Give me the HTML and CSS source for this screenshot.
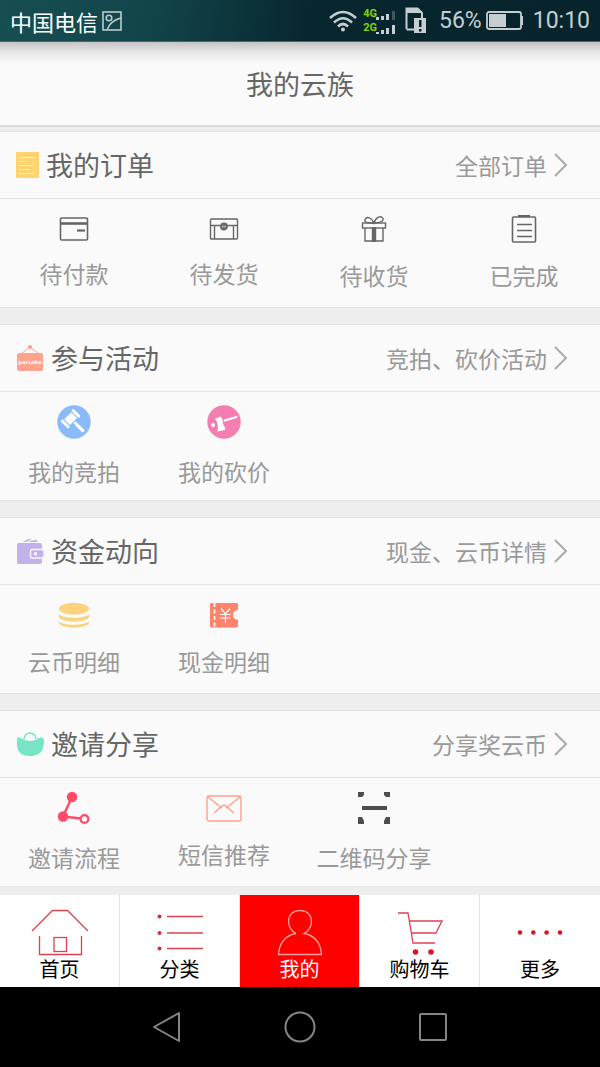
FILE: index.html
```
<!DOCTYPE html>
<html lang="zh-CN">
<head>
<meta charset="utf-8">
<meta name="viewport" content="width=device-width, initial-scale=1">
<title>我的云族</title>
<link rel="stylesheet" href="styles.css">
</head>
<body>
<div class="status">
  <span class="carrier">中国电信</span>
  <svg class="shot" width="20" height="20" viewBox="0 0 20 20" fill="none" stroke="#b9cccd" stroke-width="1.6"><rect x="1" y="1" width="18" height="18"/><circle cx="7" cy="7" r="2.8"/><path d="M5 19C7 13 11 9 19 7"/></svg>
  <div class="status-right">
    <svg width="28" height="22" viewBox="0 0 28 22" fill="none" stroke="#c5cfd2" stroke-width="2.6"><path d="M1 8Q14-4 27 8M5 12.500Q14 4 23 12.500M9 16.500Q14 11.500 19 16.500"/><circle cx="14" cy="19.500" r="2" fill="#c5cfd2" stroke="none"/></svg>
    <div class="networks"><span>4G</span><span>2G</span></div>
    <svg class="bars" width="21" height="26" viewBox="0 0 21 26" fill="#c5cfd2"><path d="M1 9h3v3H1zM6 8h3v4H6zM11 6h3v6h-3zM1 24h3v3H1zM6 22h3v4H6zM11 20h3v6h-3zM17 17h3v9h-3z"/><path fill="#3f565c" d="M17 3h3v9h-3z"/></svg>
    <svg class="sim" width="22" height="27" viewBox="0 0 22 27"><path d="M1.500 22V1.500h11L17 6v5M1.500 22.500H10" fill="none" stroke="#c5cfd2" stroke-width="2"/><path d="M1 1h12l4 5H1z" fill="#c5cfd2"/><path d="M9 11h12v15H9z" fill="#c5cfd2"/><path d="M14 13h2.500v7H14zM14 22h2.500v2.500H14z" fill="#07242c"/></svg>
    <span class="percent">56%</span>
    <svg class="battery" width="38" height="20" viewBox="0 0 38 20"><rect x="1" y="1" width="34" height="17" rx="2" fill="none" stroke="#c5cfd2" stroke-width="1.800"/><path d="M3 3h17v13H3zM35 5h2v9h-2z" fill="#c5cfd2"/></svg>
    <span class="clock">10:10</span>
  </div>
</div>

<header class="title-bar"><h1>我的云族</h1></header>

<main class="sections">
  <section class="card">
    <div class="card-head">
      <h2><svg width="23" height="28" viewBox="0 0 23 28"><path d="M0 1h23v26H0z" fill="#ffd470"/><path d="M3 6.500h17M3 10.500h7M3 14.500h15M3 18.500h11M3 22.500h15" stroke="#fff1cc" stroke-width="1.200"/></svg>我的订单</h2>
      <a class="more" href="#">全部订单<svg width="14" height="24" viewBox="0 0 14 24"><path d="M1 1l11 11L1 23"/></svg></a>
    </div>
    <div class="card-body">
      <a class="item item-s" href="#"><svg width="30" height="24" viewBox="0 0 30 24" fill="none" stroke="#666"><rect x="1.500" y="1" width="27" height="22" rx="1" stroke-width="1.600"/><path d="M1 6.500h28" stroke-width="2.600"/><path d="M18 13.500h8" stroke-width="2.200"/></svg><span>待付款</span></a>
      <a class="item item-s" href="#"><svg width="30" height="24" viewBox="0 0 30 24" fill="none" stroke="#666" stroke-width="1.400"><rect x="1.500" y="2" width="27" height="20" rx="1"/><path d="M1 8.500h10M19 8.500h10M5.500 8.500V22M24.500 8.500V22" /><circle cx="15" cy="9.500" r="2.800" stroke-width="2.400"/><path d="M15 8v3"/></svg><span>待发货</span></a>
      <a class="item item-m" href="#"><svg width="28" height="28" viewBox="0 0 28 28" fill="none" stroke="#666" stroke-width="1.400"><rect x="2.500" y="8" width="23" height="5"/><path d="M5 13v13h18V13"/><path d="M12.500 13h3v13h-3z" fill="#666"/><path d="M14 8C10 8 4 8.500 5 4.500C7 .500 12 3 14 8C16 2 21 0 23 3.500C24 7 18 8 14 8"/></svg><span>待收货</span></a>
      <a class="item item-m" href="#"><svg width="28" height="28" viewBox="0 0 28 28" fill="none" stroke="#666" stroke-width="1.600"><rect x="2.500" y="2" width="23" height="25" rx="1"/><path d="M8 1h12" stroke-width="2"/><path d="M7 9.500h15M7 15.500h15M7 21.500h15"/></svg><span>已完成</span></a>
    </div>
  </section>

  <section class="card">
    <div class="card-head">
      <h2><svg width="28" height="28" viewBox="0 0 28 28"><path d="M5 10l9-7 9 7" fill="none" stroke="#ffa28e"/><circle cx="14" cy="3" r="2" fill="#ff9c88"/><rect x="1" y="9" width="26" height="18" rx="2" fill="#ffa28e"/><text class="sign" x="14" y="20" text-anchor="middle">partake</text></svg>参与活动</h2>
      <a class="more" href="#">竞拍、砍价活动<svg width="14" height="24" viewBox="0 0 14 24"><path d="M1 1l11 11L1 23"/></svg></a>
    </div>
    <div class="card-body">
      <a class="item item-l" href="#"><svg width="34" height="34" viewBox="0 0 34 34"><circle cx="17" cy="17" r="16.700" fill="#8bbafa"/><g transform="rotate(-45 14 14)" fill="#fff"><rect x="9" y="9.500" width="10" height="8"/><rect x="5" y="8" width="3" height="11" rx="1.500"/><rect x="20" y="8" width="3" height="11" rx="1.500"/><path d="M12.800 18.500h2.600v3h-2.600z"/><rect x="12.500" y="21" width="3.200" height="11" rx="1"/></g></svg><span>我的竞拍</span></a>
      <a class="item item-l" href="#"><svg width="34" height="34" viewBox="0 0 34 34"><circle cx="17" cy="17" r="16.700" fill="#f47eb0"/><path d="M8 13.500l6-2 1.500 3.500 1 5 2 3.500-1 1.500-7 1.500c1-4 .500-9-2.500-13zM16.500 14.800l13.500-4 .600 2-13.500 4z" fill="#fff"/><circle cx="6" cy="20" r="2" fill="#fff"/></svg><span>我的砍价</span></a>
    </div>
  </section>

  <section class="card">
    <div class="card-head">
      <h2><svg width="28" height="28" viewBox="0 0 28 28"><path d="M6 5l8-3.500 1.500.800-5.500 2.700zM12 5l8-2.500 2 2.500z" fill="#c2b2ea"/><path d="M2 6h22q2 0 2 2v17q0 2-2 2H3q-2 0-2-2V7z" fill="#c2b2ea"/><rect x="14.500" y="12.500" width="13.500" height="8.500" rx="2" fill="#c2b2ea" stroke="#fafafa" stroke-width="1.300"/><circle cx="19.500" cy="16.800" r="1.800" fill="#fafafa"/></svg>资金动向</h2>
      <a class="more" href="#">现金、云币详情<svg width="14" height="24" viewBox="0 0 14 24"><path d="M1 1l11 11L1 23"/></svg></a>
    </div>
    <div class="card-body">
      <a class="item item-m" href="#"><svg width="30" height="28" viewBox="0 0 30 28" fill="#fbd37f"><path d="M0 20v2c2 6 28 6 30 0v-2c-3 5-27 5-30 0z"/><path d="M0 13v3c2 6 28 6 30 0v-3c-3 5-27 5-30 0z"/><ellipse cx="15" cy="7.800" rx="15" ry="6"/></svg><span>云币明细</span></a>
      <a class="item item-m" href="#"><svg width="30" height="28" viewBox="0 0 30 28"><path d="M2 2h26l1 1v6a5 5 0 0 0 0 10v6l-1 1.500H2l-1-1V3z" fill="#fd836a"/><path d="M5.500 2v25" stroke="#fafafa" stroke-width="1.800" stroke-dasharray="4 2.500"/><path d="M12 7.500l4.500 5.500 4.500-5.500M11 13.500h10.500M11 17h10.500M16.500 13v9" fill="none" stroke="#fff" stroke-width="1.200"/></svg><span>现金明细</span></a>
    </div>
  </section>

  <section class="card">
    <div class="card-head">
      <h2><svg width="28" height="28" viewBox="0 0 28 28"><path d="M1 9q1-3 4-1c5 4 13 4 18 0q4-2 5 2c0 11-4 16-14 16S0 21 1 9z" fill="#77e5c5"/><path d="M8 9a6 6 0 0 1 12 0" fill="none" stroke="#77e5c5" stroke-width="1.600"/></svg>邀请分享</h2>
      <a class="more" href="#">分享奖云币<svg width="14" height="24" viewBox="0 0 14 24"><path d="M1 1l11 11L1 23"/></svg></a>
    </div>
    <div class="card-body">
      <a class="item item-l" href="#"><svg width="34" height="34" viewBox="0 0 34 34"><path d="M15 6L6 25.500 28 28" fill="none" stroke="#ff4b65" stroke-width="2.400"/><circle cx="15" cy="6" r="5.200" fill="#ff4b65"/><circle cx="6" cy="25.500" r="5.200" fill="#ff4b65"/><circle cx="27.500" cy="28" r="3.900" fill="#fafafa" stroke="#ff4b65" stroke-width="2.400"/></svg><span>邀请流程</span></a>
      <a class="item item-m" href="#"><svg width="36" height="28" viewBox="0 0 36 28" fill="none" stroke="#ffa18c" stroke-width="1.400"><rect x="1" y="2" width="34" height="25" rx="2"/><path d="M2 3l14 11M34 3L20 14M8 19l8-7q2-1.500 4 0l8 7"/></svg><span>短信推荐</span></a>
      <a class="item item-l" href="#"><svg width="34" height="34" viewBox="0 0 34 34" fill="#4d4d4d"><path d="M1 1h6v3L5 6H1zM33 1h-6v3l2 2h4zM1 33h6v-3l-2-4H1zM33 33h-6v-3l2-4h4zM5 15h25v4H5z"/></svg><span>二维码分享</span></a>
    </div>
  </section>
</main>

<nav class="tabs">
  <a class="tab" href="#"><svg width="58" height="48" viewBox="0 0 58 48" fill="none" stroke="#dc4350" stroke-width="1.300"><path d="M1 22L21.500 1.500h15L57 22M8.500 27v18.500h42V27"/><rect x="23" y="28.500" width="12.500" height="14"/></svg>首页</a>
  <a class="tab" href="#"><svg width="58" height="48" viewBox="0 0 58 48" fill="#d92b3a"><circle cx="8.500" cy="7.500" r="2"/><circle cx="8.500" cy="24" r="2"/><circle cx="8.500" cy="39.500" r="2"/><path d="M16 7.500h36M16 24h36M16 39.500h36" stroke="#dc4350" stroke-width="1.300"/></svg>分类</a>
  <a class="tab active" href="#"><svg width="58" height="48" viewBox="0 0 58 48" fill="none" stroke="#ffa0a0" stroke-width="1.300"><path d="M25 24.500C14 19 15 1.500 29 1.500S44 19 33 24.500C43 26 50 34 50.500 45.500h-43C8 34 15 26 25 24.500"/></svg>我的</a>
  <a class="tab" href="#"><svg width="58" height="48" viewBox="0 0 58 48" fill="none" stroke="#dc4350" stroke-width="1.300"><path d="M7 4h10l5 30h22M18 12h33l-6 12H20"/><circle cx="24.500" cy="43" r="2.800" fill="#d91625" stroke="none"/><circle cx="40" cy="43" r="2.800" fill="#d91625" stroke="none"/></svg>购物车</a>
  <a class="tab" href="#"><svg width="58" height="48" viewBox="0 0 58 48" fill="#d91625"><circle cx="9" cy="23.500" r="2.300"/><circle cx="22.300" cy="23.500" r="2.300"/><circle cx="35.600" cy="23.500" r="2.300"/><circle cx="49" cy="23.500" r="2.300"/></svg>更多</a>
</nav>

<div class="system-nav">
  <button type="button" aria-label="返回"><svg width="32" height="32" viewBox="0 0 32 32"><path d="M28 2v28L3 16z"/></svg></button>
  <button type="button" aria-label="主屏幕"><svg width="32" height="32" viewBox="0 0 32 32"><circle cx="16" cy="16" r="14.500"/></svg></button>
  <button type="button" aria-label="最近任务"><svg width="32" height="32" viewBox="0 0 32 32"><rect x="3" y="3" width="26" height="26" rx="1"/></svg></button>
</div>
</body>
</html>
```
FILE: styles.css
```
* { box-sizing: border-box; }

body {
  margin: 0;
  min-height: 100vh;
  display: flex;
  flex-direction: column;
  background: #eee;
  color: #666;
  font-family: "Noto Sans CJK SC", sans-serif;
}

a { color: inherit; text-decoration: none; }
svg { display: block; flex: none; }
h1, h2 { margin: 0; font-weight: 400; font-size: 27px; line-height: 40px; }

.status {
  display: flex;
  align-items: center;
  height: 42px;
  padding: 0 10px;
  background: linear-gradient(100deg, #174e52 0%, #12454b 25%, #07262e 52%, #07242c 100%);
  border-bottom: 1px solid #4b6468;
}
.carrier { color: #fff; font-size: 22px; line-height: 32px; }
.shot { margin-left: 4px; }
.status-right {
  display: flex;
  align-items: center;
  margin-left: auto;
  color: #c5cfd2;
  font: 23px/32px Roboto, sans-serif;
}
.networks {
  display: flex;
  flex-direction: column;
  margin-left: 6px;
  color: #86d400;
  font: bold 11px/14px Roboto, sans-serif;
}
.bars { margin-left: -2px; }
.sim { margin-left: 9px; }
.percent { margin-left: 12px; }
.battery { margin: 0 9px 0 4px; }

.title-bar {
  display: flex;
  justify-content: center;
  padding: 22px 0 21px;
  border-bottom: 2px solid #dcdcdc;
  background: linear-gradient(#c4c4c4, #e6e6e6 10px, #fafafa 22px);
}

.sections {
  display: flex;
  flex-direction: column;
  gap: 16px;
  padding: 4px 0 8px;
}
.card {
  border: solid #e2e2e2;
  border-width: 1px 0;
  background: #fafafa;
}
.card-head {
  display: flex;
  align-items: center;
  justify-content: space-between;
  padding: 13px 32px 13px 16px;
  border-bottom: 1px solid #e4e4e4;
}
.card-head h2 { display: flex; align-items: center; gap: 7px; }
.more {
  display: flex;
  align-items: center;
  gap: 7px;
  color: #999;
  font-size: 23px;
  line-height: 32px;
}
.more svg { fill: none; stroke: #aaa; stroke-width: 2; }
.sign { fill: #fff; font: bold 6px "Open Sans", sans-serif; }

.card-body {
  display: grid;
  grid-template-columns: repeat(4, 1fr);
  min-height: 108px;
}
.item {
  display: flex;
  flex-direction: column;
  align-items: center;
  gap: 16px;
  padding-right: 2px;
  color: #999;
  font-size: 23px;
  line-height: 32px;
}
.item-s { padding-top: 18px; }
.item-m { padding-top: 16px; }
.item-l { padding-top: 13px; }

.tabs {
  display: grid;
  grid-template-columns: repeat(5, 1fr);
  background: #fff;
}
.tab {
  display: flex;
  flex-direction: column;
  align-items: center;
  padding: 14px 0 6px;
  border-right: 1px solid #e4e4e4;
  color: #000;
  font-size: 20px;
  line-height: 24px;
}
.tab:last-child { border-right: 0; }
.tab.active { background: #f00; color: #fff; }

.system-nav {
  display: flex;
  flex: 1;
  align-items: center;
  justify-content: center;
  gap: 101px;
  min-height: 80px;
  background: #000;
}
.system-nav button { padding: 0; border: 0; background: none; }
.system-nav svg { fill: none; stroke: #858585; stroke-width: 2; stroke-linejoin: round; }
```
